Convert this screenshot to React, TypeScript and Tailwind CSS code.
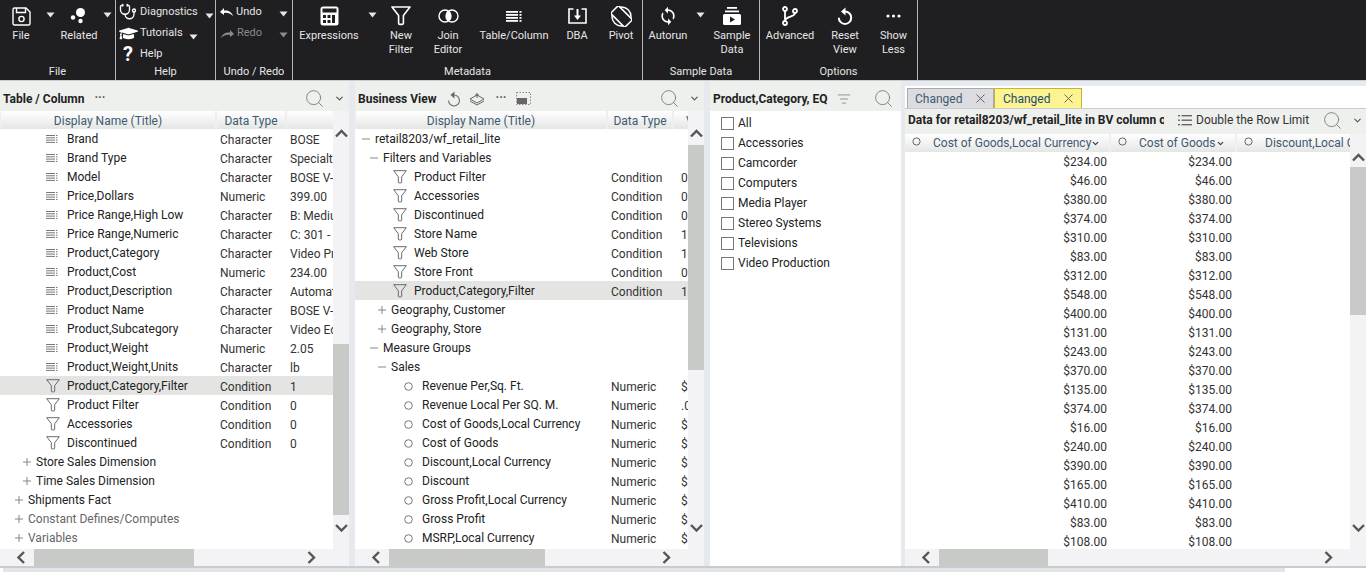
import type { ReactNode } from "react";
import { Search, ChevronDown, ListFilter, X, Stethoscope } from "lucide-react";
import { FaGraduationCap } from "react-icons/fa";
import { MdSync } from "react-icons/md";

const Caret = ({ className = "" }: { className?: string }) => (
  <svg width="9" height="6" viewBox="0 0 9 6" className={className}>
    <path d="M0.5 0.5H8.5L4.5 5.5Z" fill="currentColor" />
  </svg>
);

const FunnelPath = "M1 1h18l-6.6 8.6v7.6a1.2 1.2 0 0 1-1.2 1.2H8.8a1.2 1.2 0 0 1-1.2-1.2V9.6Z";

const Funnel = ({ size = 20, stroke = 1.6, color = "#fff" }: { size?: number; stroke?: number; color?: string }) => (
  <svg width={size} height={size} viewBox="0 0 20 20" fill="none">
    <path d={FunnelPath} stroke={color} strokeWidth={stroke} strokeLinejoin="round" />
  </svg>
);

const ResetIcon = ({ color = "#fff", w = 2, size = 16 }: { color?: string; w?: number; size?: number }) => (
  <svg width={size} height={size + 2} viewBox="0 0 16 18" fill="none">
    <path d="M8 4.5a6.2 6.2 0 1 1-6.2 6.2" stroke={color} strokeWidth={w} />
    <path d="M8.5 0.5L4 4.5L8.5 8.5Z" fill={color} />
  </svg>
);

const ribbonIcons: Record<string, ReactNode> = {
  save: (
    <svg width="19" height="19" viewBox="0 0 19 19" fill="none" stroke="#fff" strokeWidth="1.4">
      <path d="M2.5 1h11.5l4 4v11.5a1.5 1.5 0 0 1-1.5 1.5h-14A1.5 1.5 0 0 1 1 16.500v-14A1.500 1.500 0 0 1 2.500 1Z" />
      <path d="M4.500 1v4.500h9V1" />
      <circle cx="9.500" cy="12" r="2.600" />
    </svg>
  ),
  related: (
    <svg width="18" height="18" viewBox="0 0 18 18" fill="#fff">
      <circle cx="10.500" cy="5.500" r="4.500" />
      <circle cx="3" cy="10.500" r="2.200" />
      <circle cx="10.500" cy="14" r="2.200" />
    </svg>
  ),
  calc: (
    <svg width="19" height="20" viewBox="0 0 19 20">
      <rect x="0.500" y="0.500" width="18" height="19" rx="2.500" fill="#fff" />
      <rect x="2.500" y="2.500" width="14" height="4" fill="#1f1e21" />
      <rect x="3" y="9" width="3" height="3" fill="#1f1e21" />
      <rect x="7.500" y="9" width="3" height="3" fill="#1f1e21" />
      <rect x="12" y="9" width="3" height="8" fill="#1f1e21" />
      <rect x="3" y="14" width="3" height="3" fill="#1f1e21" />
      <rect x="7.500" y="14" width="3" height="3" fill="#1f1e21" />
    </svg>
  ),
  filter: <Funnel />,
  join: (
    <svg width="21" height="14" viewBox="0 0 21 14" fill="none">
      <circle cx="7" cy="7" r="6" stroke="#fff" strokeWidth="1.400" />
      <circle cx="14" cy="7" r="6" stroke="#fff" strokeWidth="1.400" />
      <path d="M10.500 2.100a6 6 0 0 1 0 9.800a6 6 0 0 1 0-9.800Z" fill="#fff" />
    </svg>
  ),
  table: (
    <svg width="16" height="11" viewBox="0 0 16 11" fill="#fff">
      <rect y="0" width="12" height="1.800" />
      <rect y="3" width="12" height="1.800" />
      <rect y="6" width="12" height="1.800" />
      <rect y="9" width="12" height="1.800" />
      <rect x="13.500" y="0" width="2" height="1.800" />
      <rect x="13.500" y="3" width="2" height="1.800" />
      <rect x="13.500" y="6" width="2" height="1.800" />
      <rect x="13.500" y="9" width="2" height="1.800" />
    </svg>
  ),
  dba: (
    <svg width="19" height="16" viewBox="0 0 19 16" fill="none" stroke="#fff" strokeWidth="1.600">
      <path d="M5.500 1H1v14h17V1h-4.500" />
      <path d="M9.500 1v8" strokeWidth="2" />
      <path d="M6 7.500h7L9.500 12Z" fill="#fff" strokeWidth="0" />
    </svg>
  ),
  pivot: (
    <svg width="21" height="21" viewBox="0 0 21 21" fill="none" stroke="#fff" strokeWidth="1.500">
      <circle cx="10.500" cy="10.500" r="9.500" />
      <rect x="5" y="0.500" width="11" height="20" rx="1.500" transform="rotate(-45 10.500 10.500)" fill="#1f1e21" />
    </svg>
  ),
  sync: <MdSync size={20} color="#fff" />,
  sample: (
    <svg width="18" height="18" viewBox="0 0 18 18" fill="#fff">
      <rect x="4" y="0" width="10" height="1.800" />
      <rect x="2" y="3.500" width="14" height="1.800" />
      <path d="M1.500 7h15A1.500 1.500 0 0 1 18 8.500v8a1.500 1.500 0 0 1-1.500 1.500h-15A1.500 1.500 0 0 1 0 16.500v-8A1.500 1.500 0 0 1 1.500 7Z" />
      <path d="M7 9.500l5 3-5 3Z" fill="#1f1e21" />
    </svg>
  ),
  branch: (
    <svg width="16" height="20" viewBox="0 0 16 20" fill="none" stroke="#fff" strokeWidth="1.800">
      <circle cx="3" cy="3" r="2" />
      <circle cx="3" cy="17" r="2" />
      <circle cx="13" cy="5" r="2" />
      <path d="M3 5v10M13 7c0 4-8 3-10 7" />
    </svg>
  ),
  reset: <ResetIcon />,
  dots: (
    <svg width="15" height="4" viewBox="0 0 15 4" fill="#fff">
      <circle cx="2" cy="2" r="1.600" />
      <circle cx="7.500" cy="2" r="1.600" />
      <circle cx="13" cy="2" r="1.600" />
    </svg>
  ),
};

const RibbonBtn = ({ icon, label, width }: { icon: string; label: string[]; width: string }) => (
  <div className={`flex flex-col items-center ${width}`}>
    <div className="flex h-[29px] items-center justify-center pt-[3px]">{ribbonIcons[icon]}</div>
    {label.map((l) => (
      <div key={l} className="h-[14px] leading-[14px] whitespace-nowrap">{l}</div>
    ))}
  </div>
);

const RibbonCaret = ({ width }: { width: string }) => (
  <div className={`flex justify-center pt-[12px] ${width}`}>
    <Caret />
  </div>
);

const RibbonGroup = ({ title, width, children }: { title: string; width: string; children: ReactNode }) => (
  <div className={`flex h-[80px] shrink-0 flex-col border-r border-[#b4b6b8] ${width}`}>
    <div className="flex h-[64px]">{children}</div>
    <div className="h-[16px] text-center leading-[15px]">{title}</div>
  </div>
);

const Ribbon = () => (
  <div className="flex h-[80px] bg-[#1f1e21] text-[11px] text-[#e6e6e6]">
    <RibbonGroup title="File" width="w-[116px]">
      <RibbonBtn icon="save" label={["File"]} width="w-[42px]" />
      <RibbonCaret width="w-[16px]" />
      <RibbonBtn icon="related" label={["Related"]} width="w-[42px]" />
      <RibbonCaret width="w-[15px]" />
    </RibbonGroup>
    <RibbonGroup title="Help" width="w-[100px]">
      <div className="flex w-full flex-col pt-[1px]">
        <div className="flex h-[22px] items-center">
          <div className="flex w-[24px] justify-center"><Stethoscope size={18} color="#fff" strokeWidth={1.8} /></div>
          <span>Diagnostics</span>
          <Caret className="ml-[7px] mt-[7px]" />
        </div>
        <div className="flex h-[21px] items-center">
          <div className="flex w-[24px] justify-center"><FaGraduationCap size={19} color="#fff" /></div>
          <span>Tutorials</span>
          <Caret className="ml-[6px] mt-[7px]" />
        </div>
        <div className="flex h-[20px] items-center">
          <div className="flex w-[24px] justify-center text-[20px] font-bold text-white">?</div>
          <span>Help</span>
        </div>
      </div>
    </RibbonGroup>
    <RibbonGroup title="Undo / Redo" width="w-[77px]">
      <div className="flex w-full flex-col pt-[1px]">
        <div className="flex h-[22px] items-center">
          <svg width="14" height="8" viewBox="0 0 14 8" className="ml-[4px] mr-[2px]">
            <path d="M4 0L0 4l4 3V5c3-.5 6 0 9 3-1-4-5-6-9-5.500Z" fill="#fff" />
          </svg>
          <span>Undo</span>
          <Caret className="ml-[17px] mt-[3px]" />
        </div>
        <div className="flex h-[21px] items-center text-[#8a8a8a]">
          <svg width="14" height="8" viewBox="0 0 14 8" className="ml-[4px] mr-[3px]">
            <path d="M10 0l4 4-4 3V5C7 4.500 4 5 1 8c1-4 5-6 9-5.500Z" fill="#8a8a8a" />
          </svg>
          <span>Redo</span>
          <Caret className="ml-[17px] mt-[3px]" />
        </div>
      </div>
    </RibbonGroup>
    <RibbonGroup title="Metadata" width="w-[350px]">
      <RibbonBtn icon="calc" label={["Expressions"]} width="w-[72px]" />
      <RibbonCaret width="w-[15px]" />
      <RibbonBtn icon="filter" label={["New", "Filter"]} width="w-[42px]" />
      <RibbonBtn icon="join" label={["Join", "Editor"]} width="w-[52px]" />
      <RibbonBtn icon="table" label={["Table/Column"]} width="w-[80px]" />
      <RibbonBtn icon="dba" label={["DBA"]} width="w-[46px]" />
      <RibbonBtn icon="pivot" label={["Pivot"]} width="w-[42px]" />
    </RibbonGroup>
    <RibbonGroup title="Sample Data" width="w-[117px]">
      <RibbonBtn icon="sync" label={["Autorun"]} width="w-[50px]" />
      <RibbonCaret width="w-[15px]" />
      <RibbonBtn icon="sample" label={["Sample", "Data"]} width="w-[48px]" />
    </RibbonGroup>
    <RibbonGroup title="Options" width="w-[158px]">
      <RibbonBtn icon="branch" label={["Advanced"]} width="w-[60px]" />
      <RibbonBtn icon="reset" label={["Reset", "View"]} width="w-[50px]" />
      <RibbonBtn icon="dots" label={["Show", "Less"]} width="w-[47px]" />
    </RibbonGroup>
  </div>
);

const Arrow = ({ dir }: { dir: "up" | "down" | "left" | "right" }) => {
  const d = {
    up: "M1 7.500L6.500 2L12 7.500",
    down: "M1 2L6.500 7.500L12 2",
    left: "M8 1L2.500 6.500L8 12",
    right: "M2.500 1L8 6.500L2.500 12",
  }[dir];
  const vertical = dir === "up" || dir === "down";
  return (
    <svg width={vertical ? 13 : 10} height={vertical ? 9 : 13} viewBox={vertical ? "0 0 13 9" : "0 0 10 13"} fill="none">
      <path d={d} stroke="#555" strokeWidth="2.400" />
    </svg>
  );
};

// vertical bar, the spacing around the thumb differs per panel
const VScroll = ({ upPad, thumb }: { upPad: string; thumb: string }) => (
  <div className="flex w-[16px] shrink-0 flex-col items-center bg-[#f3f2f5] pt-[18px]">
    <div className={upPad}><Arrow dir="up" /></div>
    <div className={`w-full bg-[#c8cac8] ${thumb}`} />
    <div className="mb-[17px] mt-auto"><Arrow dir="down" /></div>
  </div>
);

const HScroll = ({ thumb }: { thumb: string }) => (
  <div className="flex h-[17px] shrink-0 items-center bg-[#f3f2f5]">
    <div className="flex w-[34px] pl-[16px]"><Arrow dir="left" /></div>
    <div className={`h-full bg-[#c8cac8] ${thumb}`} />
    <div className="ml-auto flex pr-[33px]"><Arrow dir="right" /></div>
  </div>
);

const HeadCell = ({ className, children }: { className: string; children?: ReactNode }) => (
  <div className={`h-[18px] overflow-hidden bg-gradient-to-b from-white to-[#e4e6e4] leading-[20px] text-[#3f5a70] ${className}`}>
    {children}
  </div>
);

type Kind = "lines" | "filter" | "circle" | "plus" | "minus";

const RowIcon = ({ kind }: { kind: Kind }) => {
  if (kind === "filter") return <div className="mr-[7px]"><Funnel size={14} stroke={1.400} color="#666" /></div>;
  if (kind === "lines")
    return (
      <svg width="12" height="8" viewBox="0 0 12 8" fill="#777" className="ml-[1px] mr-[9px]">
        <rect y="0" width="9" height="1" />
        <rect y="2.300" width="9" height="1" />
        <rect y="4.600" width="9" height="1" />
        <rect y="6.900" width="9" height="1" />
        <rect x="10" y="0" width="1.500" height="1" />
        <rect x="10" y="2.300" width="1.500" height="1" />
        <rect x="10" y="4.600" width="1.500" height="1" />
        <rect x="10" y="6.900" width="1.500" height="1" />
      </svg>
    );
  if (kind === "circle")
    return (
      <svg width="9" height="9" viewBox="0 0 9 9" fill="none" className="mr-[9px]">
        <circle cx="4.500" cy="4.500" r="3.800" stroke="#777" />
      </svg>
    );
  return (
    <svg width="8" height="8" viewBox="0 0 8 8" fill="#888" className="mr-[5px]">
      <rect y="3.500" width="8" height="1" />
      {kind === "plus" && <rect x="3.500" width="1" height="8" />}
    </svg>
  );
};

type Row = { pl: string; kind: Kind; name: string; type?: string; val?: string; muted?: boolean; on?: boolean };

const TreeRow = ({ row, cols }: { row: Row; cols: string }) => (
  <div className={`grid h-[19px] items-center ${cols} ${row.on ? "bg-[#e4e5e3]" : ""}`}>
    <div className={`flex items-center overflow-hidden ${row.pl}`}>
      <RowIcon kind={row.kind} />
      <span className={`whitespace-nowrap ${row.muted ? "text-[#666]" : "text-[#222]"}`}>{row.name}</span>
    </div>
    {row.type && <div className="mt-[2px] text-[#333]">{row.type}</div>}
    {row.val && <div className="mt-[2px] overflow-hidden whitespace-nowrap text-[#333]">{row.val}</div>}
  </div>
);

const tableRows: Row[] = [
  { pl: "pl-[45px]", kind: "lines", name: "Brand", type: "Character", val: "BOSE" },
  { pl: "pl-[45px]", kind: "lines", name: "Brand Type", type: "Character", val: "Specialty" },
  { pl: "pl-[45px]", kind: "lines", name: "Model", type: "Character", val: "BOSE V-Class" },
  { pl: "pl-[45px]", kind: "lines", name: "Price,Dollars", type: "Numeric", val: "399.00" },
  { pl: "pl-[45px]", kind: "lines", name: "Price Range,High Low", type: "Character", val: "B: Medium" },
  { pl: "pl-[45px]", kind: "lines", name: "Price Range,Numeric", type: "Character", val: "C: 301 - 500" },
  { pl: "pl-[45px]", kind: "lines", name: "Product,Category", type: "Character", val: "Video Production" },
  { pl: "pl-[45px]", kind: "lines", name: "Product,Cost", type: "Numeric", val: "234.00" },
  { pl: "pl-[45px]", kind: "lines", name: "Product,Description", type: "Character", val: "Automatic" },
  { pl: "pl-[45px]", kind: "lines", name: "Product Name", type: "Character", val: "BOSE V-Class" },
  { pl: "pl-[45px]", kind: "lines", name: "Product,Subcategory", type: "Character", val: "Video Editing" },
  { pl: "pl-[45px]", kind: "lines", name: "Product,Weight", type: "Numeric", val: "2.05" },
  { pl: "pl-[45px]", kind: "lines", name: "Product,Weight,Units", type: "Character", val: "lb" },
  { pl: "pl-[46px]", kind: "filter", name: "Product,Category,Filter", type: "Condition", val: "1", on: true },
  { pl: "pl-[46px]", kind: "filter", name: "Product Filter", type: "Condition", val: "0" },
  { pl: "pl-[46px]", kind: "filter", name: "Accessories", type: "Condition", val: "0" },
  { pl: "pl-[46px]", kind: "filter", name: "Discontinued", type: "Condition", val: "0" },
  { pl: "pl-[23px]", kind: "plus", name: "Store Sales Dimension" },
  { pl: "pl-[23px]", kind: "plus", name: "Time Sales Dimension" },
  { pl: "pl-[15px]", kind: "plus", name: "Shipments Fact" },
  { pl: "pl-[15px]", kind: "plus", name: "Constant Defines/Computes", muted: true },
  { pl: "pl-[15px]", kind: "plus", name: "Variables", muted: true },
];

const viewRows: Row[] = [
  { pl: "pl-[7px]", kind: "minus", name: "retail8203/wf_retail_lite" },
  { pl: "pl-[15px]", kind: "minus", name: "Filters and Variables" },
  { pl: "pl-[38px]", kind: "filter", name: "Product Filter", type: "Condition", val: "0" },
  { pl: "pl-[38px]", kind: "filter", name: "Accessories", type: "Condition", val: "0" },
  { pl: "pl-[38px]", kind: "filter", name: "Discontinued", type: "Condition", val: "0" },
  { pl: "pl-[38px]", kind: "filter", name: "Store Name", type: "Condition", val: "1" },
  { pl: "pl-[38px]", kind: "filter", name: "Web Store", type: "Condition", val: "1" },
  { pl: "pl-[38px]", kind: "filter", name: "Store Front", type: "Condition", val: "0" },
  { pl: "pl-[38px]", kind: "filter", name: "Product,Category,Filter", type: "Condition", val: "1", on: true },
  { pl: "pl-[23px]", kind: "plus", name: "Geography, Customer" },
  { pl: "pl-[23px]", kind: "plus", name: "Geography, Store" },
  { pl: "pl-[15px]", kind: "minus", name: "Measure Groups" },
  { pl: "pl-[23px]", kind: "minus", name: "Sales" },
  { pl: "pl-[49px]", kind: "circle", name: "Revenue Per,Sq. Ft.", type: "Numeric", val: "$1" },
  { pl: "pl-[49px]", kind: "circle", name: "Revenue Local Per SQ. M.", type: "Numeric", val: ".00" },
  { pl: "pl-[49px]", kind: "circle", name: "Cost of Goods,Local Currency", type: "Numeric", val: "$2" },
  { pl: "pl-[49px]", kind: "circle", name: "Cost of Goods", type: "Numeric", val: "$2" },
  { pl: "pl-[49px]", kind: "circle", name: "Discount,Local Currency", type: "Numeric", val: "$1" },
  { pl: "pl-[49px]", kind: "circle", name: "Discount", type: "Numeric", val: "$1" },
  { pl: "pl-[49px]", kind: "circle", name: "Gross Profit,Local Currency", type: "Numeric", val: "$1" },
  { pl: "pl-[49px]", kind: "circle", name: "Gross Profit", type: "Numeric", val: "$1" },
  { pl: "pl-[49px]", kind: "circle", name: "MSRP,Local Currency", type: "Numeric", val: "$3" },
];

const categories = ["All", "Accessories", "Camcorder", "Computers", "Media Player", "Stereo Systems", "Televisions", "Video Production"];

const prices = ["234", "46", "380", "374", "310", "83", "312", "548", "400", "131", "243", "370", "135", "374", "16", "240", "390", "165", "410", "83", "108"];

const PanelSearch = () => <Search size={21} color="#777" strokeWidth={1} />;

const TablePanel = () => (
  <div className="flex w-[349px] shrink-0 flex-col">
    <div className="flex h-[30px] items-center bg-[#eef0ee] pl-[3px] pt-[5px]">
      <b className="font-bold text-[#222]">Table / Column</b>
      <span className="ml-[10px] mb-[2px] font-bold leading-none text-[#555]">···</span>
      <div className="ml-auto mr-[9px]"><PanelSearch /></div>
      <ChevronDown size={11} color="#555" strokeWidth={2.500} className="mr-[4px]" />
    </div>
    <div className="flex min-h-0 flex-1">
      <div className="w-[333px] shrink-0 bg-white">
        <div className="flex gap-[2px] bg-[#eef0ee] text-center">
          <HeadCell className="ml-[1px] w-[214px]">Display Name (Title)</HeadCell>
          <HeadCell className="w-[68px]">Data Type</HeadCell>
          <HeadCell className="flex-1" />
        </div>
        {tableRows.map((r) => (
          <TreeRow key={r.name} row={r} cols="grid-cols-[220px_70px_43px]" />
        ))}
      </div>
      <VScroll upPad="" thumb="mt-[206px] h-[171px]" />
    </div>
    <HScroll thumb="w-[160px]" />
  </div>
);

const ViewPanel = () => (
  <div className="flex w-[349px] shrink-0 flex-col">
    <div className="flex h-[30px] items-center bg-[#eef0ee] pl-[3px] pt-[5px]">
      <b className="font-bold text-[#222]">Business View</b>
      <div className="ml-[10px]"><ResetIcon color="#666" w={1.200} size={14} /></div>
      <svg width="16" height="14" viewBox="0 0 16 14" fill="none" stroke="#666" className="ml-[8px]">
        <path d="M1 7l7-4 7 4-7 4Z" />
        <path d="M1 9l7 4 7-4" />
        <path d="M8 1v5M6 3h4" />
      </svg>
      <span className="ml-[11px] mb-[2px] font-bold leading-none text-[#555]">···</span>
      <svg width="15" height="13" viewBox="0 0 15 13" className="ml-[10px]">
        <rect x="0.500" y="0.500" width="14" height="12" fill="none" stroke="#888" strokeDasharray="1.500 1.500" />
        <rect x="1" y="6" width="10" height="6" fill="#666" />
      </svg>
      <div className="ml-auto mr-[9px]"><PanelSearch /></div>
      <ChevronDown size={11} color="#555" strokeWidth={2.500} className="mr-[4px]" />
    </div>
    <div className="flex min-h-0 flex-1">
      <div className="w-[333px] shrink-0 bg-white">
        <div className="flex gap-[2px] bg-[#eef0ee] text-center">
          <HeadCell className="ml-[1px] w-[250px]">Display Name (Title)</HeadCell>
          <HeadCell className="w-[64px]">Data Type</HeadCell>
          <HeadCell className="flex-1 text-left"><span className="pl-[12px]">V</span></HeadCell>
        </div>
        {viewRows.map((r) => (
          <TreeRow key={r.name} row={r} cols="grid-cols-[256px_70px_7px]" />
        ))}
      </div>
      <VScroll upPad="" thumb="mt-[7px] h-[225px]" />
    </div>
    <HScroll thumb="w-[156px]" />
  </div>
);

const FilterPanel = () => (
  <div className="flex w-[191px] shrink-0 flex-col">
    <div className="flex h-[30px] items-center bg-[#eef0ee] pl-[3px] pt-[5px]">
      <b className="font-bold text-[#222]">Product,Category, EQ</b>
      <ListFilter size={14} color="#888" strokeWidth={1.500} className="ml-[9px]" />
      <div className="ml-auto mr-[7px]"><PanelSearch /></div>
    </div>
    <div className="flex-1 bg-white pl-[11px] pt-[2px]">
      {categories.map((c) => (
        <div key={c} className="flex h-[20px] items-center gap-[4px] text-[#222]">
          <div className="h-[13px] w-[13px] border border-[#777] bg-white" />
          {c}
        </div>
      ))}
    </div>
  </div>
);

const DataHead = ({ className, label, caret }: { className: string; label: string; caret?: boolean }) => (
  <HeadCell className={`flex items-center ${className}`}>
    <svg width="9" height="9" viewBox="0 0 9 9" fill="none" className="mb-[4px] ml-[7px] mr-[12px] shrink-0">
      <circle cx="4.500" cy="4.500" r="3.600" stroke="#666" />
    </svg>
    <span className="whitespace-nowrap">{label}</span>
    {caret && <ChevronDown size={9} color="#333" strokeWidth={3} />}
  </HeadCell>
);

const DataPanel = () => (
  <div className="flex min-w-0 flex-1 flex-col">
    <div className="h-[5px]" />
    <div className="flex h-[22px] items-end bg-white pl-[2px]">
      <div className="flex h-[20px] w-[87px] items-center border border-b-0 border-[#aaa] bg-[#dcdce0] pl-[7px] text-[#3f5a70]">
        Changed
        <X size={15} color="#555" strokeWidth={1.400} className="ml-[11px]" />
      </div>
      <div className="flex h-[20px] w-[88px] items-center border border-b-0 border-[#c8b23a] bg-[#fbf490] pl-[8px] text-[#1f4a70]">
        Changed
        <X size={15} color="#555" strokeWidth={1.400} className="ml-[11px]" />
      </div>
    </div>
    <div className="flex h-[26px] items-center border-t border-[#c8cacc] bg-[#eef0ee] pb-[3px] pl-[3px]">
      <b className="w-[256px] shrink-0 overflow-hidden whitespace-nowrap font-bold text-[#222]">
        Data for retail8203/wf_retail_lite in BV column order
      </b>
      <svg width="14" height="11" viewBox="0 0 14 11" fill="#666" className="ml-[14px] mr-[4px]">
        <rect width="2" height="1.400" />
        <rect x="3.500" width="10.500" height="1.400" />
        <rect y="4.500" width="2" height="1.400" />
        <rect x="3.500" y="4.500" width="10.500" height="1.400" />
        <rect y="9" width="2" height="1.400" />
        <rect x="3.500" y="9" width="10.500" height="1.400" />
      </svg>
      <span className="whitespace-nowrap text-[#333]">Double the Row Limit</span>
      <div className="ml-auto mr-[9px]"><PanelSearch /></div>
      <ChevronDown size={11} color="#555" strokeWidth={2.500} className="mr-[3px]" />
    </div>
    <div className="flex min-h-0 flex-1">
      <div className="w-[445px] shrink-0 overflow-hidden bg-white">
        <div className="flex gap-[2px] bg-[#eef0ee]">
          <DataHead className="w-[204px] shrink-0" label="Cost of Goods,Local Currency" caret />
          <DataHead className="w-[124px] shrink-0" label="Cost of Goods" caret />
          <DataHead className="w-[113px] shrink-0" label="Discount,Local Currency" />
        </div>
        {prices.map((p, i) => (
          <div key={i} className="grid h-[19px] grid-cols-[202px_125px] items-center text-right text-[#333]">
            <div>${p}.00</div>
            <div>${p}.00</div>
          </div>
        ))}
      </div>
      <VScroll upPad="pt-[1px]" thumb="mt-[5px] h-[148px]" />
    </div>
    <HScroll thumb="w-[109px]" />
  </div>
);

export default function App() {
  return (
    <div className="h-[572px] w-[1366px] overflow-hidden bg-white font-[family-name:Roboto,sans-serif] text-[12px]">
      <Ribbon />
      <div className="h-[1px] bg-[#c8cdd0]" />
      <div className="flex h-[485px] bg-[#e6eaee]">
        <TablePanel />
        <div className="w-[6px] shrink-0" />
        <ViewPanel />
        <div className="w-[6px] shrink-0" />
        <FilterPanel />
        <div className="w-[4px] shrink-0" />
        <DataPanel />
      </div>
      <div className="h-[2px] bg-[#c4ccd4]" />
      <div className="ml-[3px] h-[4px] w-[1282px] bg-[#e4e4e4]" />
    </div>
  );
}
